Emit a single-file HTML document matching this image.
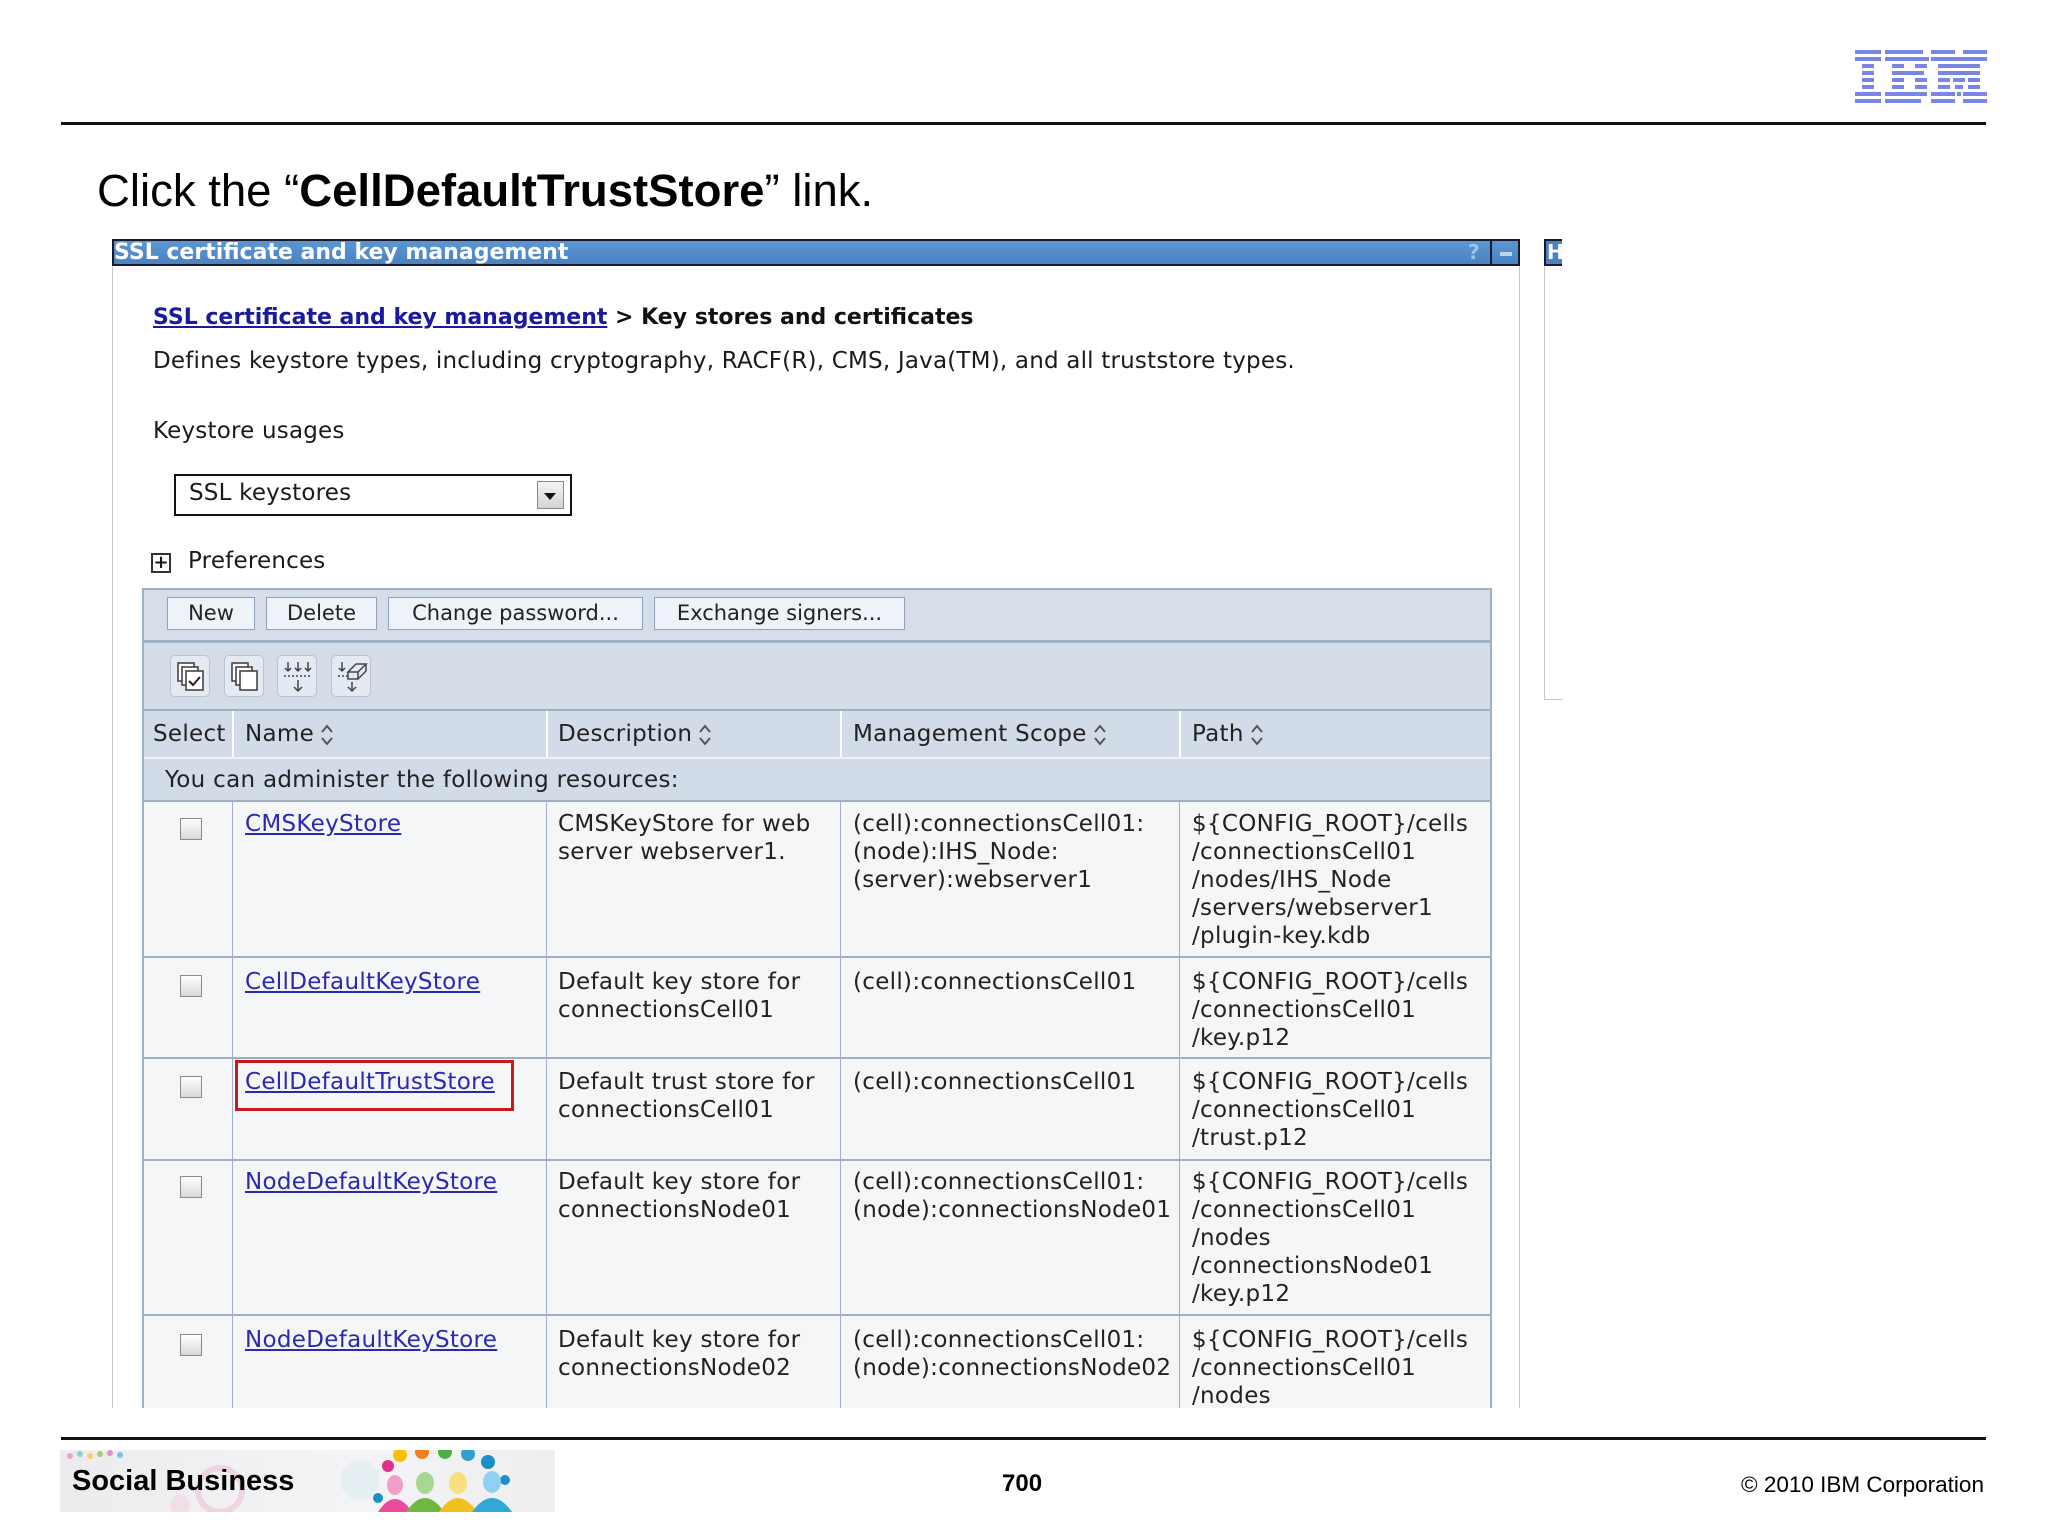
<!DOCTYPE html>
<html><head><meta charset="utf-8">
<style>
*{margin:0;padding:0;box-sizing:border-box}
body{width:2048px;height:1536px;background:#fff;position:relative;overflow:hidden;font-family:"DejaVu Sans",sans-serif;color:#1a1a1a}
.a{position:absolute;white-space:nowrap}
.ui{font-family:"DejaVu Sans",sans-serif;font-size:23px;letter-spacing:0.2px}
.btn{position:absolute;top:597px;height:33px;background:#eef3f9;border:1px solid #8ea3bb;font-size:21px;line-height:31px;text-align:center;color:#222}
.ic{position:absolute;top:655px;width:40px;height:42px;background:#e4eaf1;border:1px solid #b8c4d2;border-radius:5px}
.vl{position:absolute;width:1px;background:#9fb0c4}
.hl{position:absolute;height:2px;background:#9fb0c4;left:142px;width:1350px}
.cb{position:absolute;left:180px;width:22px;height:22px;border:1px solid #8a8a8a;background:linear-gradient(#fff,#d8d8d8)}
.t{position:absolute;font-size:23px;line-height:28px;white-space:nowrap;color:#222;letter-spacing:0.3px}
.t.lk{color:#2a2ab0;text-decoration:underline}
.srt{display:inline-block;vertical-align:middle;margin-left:6px}
</style></head><body>

<svg class="a" style="left:1855px;top:50px" width="132" height="54" viewBox="0 0 132 54">
<g fill="#7a86e6">
<rect x="0" y="0" width="26" height="4"/><rect x="30" y="0" width="38" height="4"/><rect x="76" y="0" width="24" height="4"/><rect x="108" y="0" width="24" height="4"/>
<rect x="0" y="7" width="26" height="4"/><rect x="30" y="7" width="44" height="4"/><rect x="76" y="7" width="28" height="4"/><rect x="104" y="7" width="28" height="4"/>
<rect x="7" y="14" width="12" height="4"/><rect x="37" y="14" width="12" height="4"/><rect x="60" y="14" width="12" height="4"/><rect x="83" y="14" width="42" height="4"/>
<rect x="7" y="21" width="12" height="4"/><rect x="37" y="21" width="32" height="4"/><rect x="83" y="21" width="42" height="4"/>
<rect x="7" y="28" width="12" height="4"/><rect x="37" y="28" width="12" height="4"/><rect x="60" y="28" width="12" height="4"/><rect x="83" y="28" width="12" height="4"/><rect x="98" y="28" width="12" height="4"/><rect x="113" y="28" width="12" height="4"/>
<rect x="7" y="35" width="12" height="4"/><rect x="37" y="35" width="12" height="4"/><rect x="60" y="35" width="12" height="4"/><rect x="83" y="35" width="12" height="4"/><rect x="100" y="35" width="8" height="4"/><rect x="113" y="35" width="12" height="4"/>
<rect x="0" y="42" width="26" height="4"/><rect x="30" y="42" width="42" height="4"/><rect x="76" y="42" width="24" height="4"/><rect x="102" y="42" width="4" height="4"/><rect x="108" y="42" width="24" height="4"/>
<rect x="0" y="49" width="26" height="4"/><rect x="30" y="49" width="36" height="4"/><rect x="76" y="49" width="24" height="4"/><rect x="108" y="49" width="24" height="4"/>
</g></svg>
<div class="a" style="left:61px;top:122px;width:1925px;height:3px;background:#111"></div>

<div class="a" style="left:97px;top:165px;font-family:'Liberation Sans',sans-serif;font-size:45.5px;color:#000">Click the “<b>CellDefaultTrustStore</b>” link.</div>

<div class="a" style="left:112px;top:239px;width:1408px;height:27px;background:linear-gradient(#5b96d4,#4a82c2);border:2px solid #1a1a2a"></div>
<div class="a" style="left:114px;top:239px;font-size:22px;font-weight:bold;color:#fff;line-height:27px">SSL certificate and key management</div>
<div class="a" style="left:1468px;top:239px;font-size:20px;font-weight:bold;color:#9cc4ec;line-height:27px">?</div>
<div class="a" style="left:1490px;top:241px;width:2px;height:23px;background:#1a1a2a"></div>
<div class="a" style="left:1500px;top:252px;width:12px;height:4px;background:#bcd6f0"></div>
<div class="a" style="left:112px;top:266px;width:1px;height:1142px;background:#c8c8c8"></div>
<div class="a" style="left:1519px;top:266px;width:1px;height:1142px;background:#c8c8c8"></div>
<div class="a" style="left:1544px;top:239px;width:18px;height:27px;background:#4a82c2;border:2px solid #1a1a2a;border-right:none"></div>
<div class="a" style="left:1547px;top:239px;font-size:20px;font-weight:bold;color:#fff;line-height:27px">H</div>
<div class="a" style="left:1544px;top:266px;width:1px;height:434px;background:#c8c8c8"></div>
<div class="a" style="left:1544px;top:699px;width:18px;height:1px;background:#c8c8c8"></div>

<div class="a" style="left:153px;top:305px;font-size:22px;font-weight:bold;color:#111"><span style="color:#1a1aa0;text-decoration:underline">SSL certificate and key management</span> &gt; Key stores and certificates</div>
<div class="a ui" style="left:153px;top:348px">Defines keystore types, including cryptography, RACF(R), CMS, Java(TM), and all truststore types.</div>
<div class="a ui" style="left:153px;top:418px">Keystore usages</div>

<div class="a" style="left:174px;top:474px;width:398px;height:42px;border:2px solid #111;background:#fff"></div>
<div class="a ui" style="left:189px;top:480px">SSL keystores</div>
<div class="a" style="left:537px;top:481px;width:27px;height:28px;border:1px solid #888;background:linear-gradient(#f4f4f4,#d4d4d4)"></div>
<div class="a" style="left:544px;top:493px;width:0;height:0;border-left:6px solid transparent;border-right:6px solid transparent;border-top:7px solid #111"></div>

<div class="a" style="left:151px;top:553px;width:20px;height:20px;border:2px solid #333;background:#fff;font-size:18px;line-height:15px;text-align:center;font-weight:bold">+</div>
<div class="a ui" style="left:188px;top:548px">Preferences</div>

<div class="a" style="left:142px;top:588px;width:1350px;height:820px;border:2px solid #9fb0c4;border-bottom:none;background:#f5f6f8"></div>
<div class="a" style="left:144px;top:590px;width:1346px;height:50px;background:#d5dee9"></div>
<div class="a" style="left:144px;top:640px;width:1346px;height:3px;background:#9fb0c4"></div>
<div class="a" style="left:144px;top:643px;width:1346px;height:66px;background:#d3dce7"></div>
<div class="btn" style="left:167px;width:88px">New</div>
<div class="btn" style="left:266px;width:111px">Delete</div>
<div class="btn" style="left:388px;width:255px">Change password...</div>
<div class="btn" style="left:654px;width:251px">Exchange signers...</div>

<div class="ic" style="left:170px"><svg width="40" height="42"><g fill="#fff" stroke="#444" stroke-width="1.6"><rect x="7" y="7" width="16" height="18"/><rect x="11" y="11" width="16" height="18"/><rect x="15" y="15" width="17" height="19"/></g><path d="M18 25l4 4 7-8" stroke="#222" stroke-width="2" fill="none"/></svg></div>
<div class="ic" style="left:224px"><svg width="40" height="42"><g fill="#fff" stroke="#444" stroke-width="1.6"><rect x="7" y="7" width="16" height="18"/><rect x="11" y="11" width="16" height="18"/><rect x="15" y="15" width="17" height="19"/></g></svg></div>
<div class="ic" style="left:277px"><svg width="40" height="42"><g stroke="#444" stroke-width="1.5" fill="none"><path d="M10 6v9M7 12l3 3 3-3M20 6v9M17 12l3 3 3-3M30 6v9M27 12l3 3 3-3M20 24v11M16 31l4 4 4-4"/><path d="M6 20h28" stroke-dasharray="2 2"/></g></svg></div>
<div class="ic" style="left:331px"><svg width="40" height="42"><g stroke="#444" stroke-width="1.5" fill="none"><path d="M10 6v9M7 12l3 3 3-3M20 26v9M16 31l4 4 4-4"/><path d="M16 16l8-8h10l-8 8zM16 16v7h10v-7M26 23l8-8v-7"/><path d="M6 20h12" stroke-dasharray="2 2"/></g></svg></div>

<div class="a" style="left:144px;top:709px;width:1346px;height:48px;background:#d2dce8;border-top:2px solid #9fb0c4"></div>
<div class="a" style="left:144px;top:757px;width:1346px;height:45px;background:#d2dce8;border-top:2px solid #eef2f7;border-bottom:2px solid #9fb0c4"></div>
<div class="vl" style="left:232px;top:711px;height:46px;background:#fff;width:2px"></div>
<div class="vl" style="left:546px;top:711px;height:46px;background:#fff;width:2px"></div>
<div class="vl" style="left:840px;top:711px;height:46px;background:#fff;width:2px"></div>
<div class="vl" style="left:1179px;top:711px;height:46px;background:#fff;width:2px"></div>
<div class="t" style="left:153px;top:720px">Select</div>
<div class="t" style="left:245px;top:720px">Name<svg class="srt" width="14" height="24"><path d="M2 9l5-6 5 6M2 15l5 6 5-6" stroke="#555" stroke-width="2" fill="none"/></svg></div>
<div class="t" style="left:558px;top:720px">Description<svg class="srt" width="14" height="24"><path d="M2 9l5-6 5 6M2 15l5 6 5-6" stroke="#555" stroke-width="2" fill="none"/></svg></div>
<div class="t" style="left:853px;top:720px">Management Scope<svg class="srt" width="14" height="24"><path d="M2 9l5-6 5 6M2 15l5 6 5-6" stroke="#555" stroke-width="2" fill="none"/></svg></div>
<div class="t" style="left:1192px;top:720px">Path<svg class="srt" width="14" height="24"><path d="M2 9l5-6 5 6M2 15l5 6 5-6" stroke="#555" stroke-width="2" fill="none"/></svg></div>
<div class="t" style="left:165px;top:766px">You can administer the following resources:</div>

<div class="vl" style="left:232px;top:802px;height:606px"></div>
<div class="vl" style="left:546px;top:802px;height:606px"></div>
<div class="vl" style="left:840px;top:802px;height:606px"></div>
<div class="vl" style="left:1179px;top:802px;height:606px"></div>
<div class="hl" style="top:956px"></div>
<div class="hl" style="top:1057px"></div>
<div class="hl" style="top:1159px"></div>
<div class="hl" style="top:1314px"></div>

<div class="cb" style="top:818px"></div>
<div class="t lk" style="left:245px;top:810px">CMSKeyStore</div>
<div class="t" style="left:558px;top:810px">CMSKeyStore for web<br>server webserver1.</div>
<div class="t" style="left:853px;top:810px">(cell):connectionsCell01:<br>(node):IHS_Node:<br>(server):webserver1</div>
<div class="t" style="left:1192px;top:810px">${CONFIG_ROOT}/cells<br>/connectionsCell01<br>/nodes/IHS_Node<br>/servers/webserver1<br>/plugin-key.kdb</div>

<div class="cb" style="top:975px"></div>
<div class="t lk" style="left:245px;top:968px">CellDefaultKeyStore</div>
<div class="t" style="left:558px;top:968px">Default key store for<br>connectionsCell01</div>
<div class="t" style="left:853px;top:968px">(cell):connectionsCell01</div>
<div class="t" style="left:1192px;top:968px">${CONFIG_ROOT}/cells<br>/connectionsCell01<br>/key.p12</div>

<div class="cb" style="top:1076px"></div>
<div class="a" style="left:235px;top:1060px;width:279px;height:51px;border:3px solid #c8191e"></div>
<div class="t lk" style="left:245px;top:1068px">CellDefaultTrustStore</div>
<div class="t" style="left:558px;top:1068px">Default trust store for<br>connectionsCell01</div>
<div class="t" style="left:853px;top:1068px">(cell):connectionsCell01</div>
<div class="t" style="left:1192px;top:1068px">${CONFIG_ROOT}/cells<br>/connectionsCell01<br>/trust.p12</div>

<div class="cb" style="top:1176px"></div>
<div class="t lk" style="left:245px;top:1168px">NodeDefaultKeyStore</div>
<div class="t" style="left:558px;top:1168px">Default key store for<br>connectionsNode01</div>
<div class="t" style="left:853px;top:1168px">(cell):connectionsCell01:<br>(node):connectionsNode01</div>
<div class="t" style="left:1192px;top:1168px">${CONFIG_ROOT}/cells<br>/connectionsCell01<br>/nodes<br>/connectionsNode01<br>/key.p12</div>

<div class="cb" style="top:1334px"></div>
<div class="t lk" style="left:245px;top:1326px">NodeDefaultKeyStore</div>
<div class="t" style="left:558px;top:1326px">Default key store for<br>connectionsNode02</div>
<div class="t" style="left:853px;top:1326px">(cell):connectionsCell01:<br>(node):connectionsNode02</div>
<div class="t" style="left:1192px;top:1326px;height:82px;overflow:hidden">${CONFIG_ROOT}/cells<br>/connectionsCell01<br>/nodes</div>
<div class="a" style="left:0;top:1408px;width:2048px;height:30px;background:#fff"></div>

<div class="a" style="left:61px;top:1437px;width:1925px;height:3px;background:#111"></div>
<div class="a" style="left:60px;top:1450px;width:495px;height:62px;background:linear-gradient(90deg,#ececee,#f4f4f6 60%,#eeeeef);overflow:hidden">
<svg width="495" height="62">
<g opacity="0.35"><circle cx="160" cy="40" r="22" fill="none" stroke="#f0a0c8" stroke-width="6"/><circle cx="300" cy="30" r="20" fill="#cce8f0"/><circle cx="120" cy="55" r="10" fill="#f8c0d8"/></g>
<g><circle cx="10" cy="6" r="3" fill="#f2a0c0"/><circle cx="20" cy="4" r="3" fill="#8cd0e0"/><circle cx="30" cy="6" r="3" fill="#f8d060"/><circle cx="40" cy="4" r="3" fill="#a0d070"/><circle cx="50" cy="3" r="3" fill="#e890c0"/><circle cx="60" cy="5" r="3" fill="#80c0e8"/></g>
<circle cx="340" cy="5" r="7" fill="#f8c000"/><circle cx="362" cy="2" r="7" fill="#f08020"/><circle cx="385" cy="2" r="7" fill="#50b048"/><circle cx="408" cy="4" r="7" fill="#30a0d0"/><circle cx="428" cy="12" r="7" fill="#1890c8"/><circle cx="328" cy="16" r="6" fill="#e0308c"/><circle cx="445" cy="30" r="5" fill="#1890c8"/><circle cx="318" cy="48" r="5" fill="#1890c8"/>
<ellipse cx="335" cy="35" rx="8" ry="10" fill="#f0a0c8"/><path d="M318 62q17-26 34 0z" fill="#e84c9c"/>
<ellipse cx="365" cy="33" rx="9" ry="11" fill="#a8d890"/><path d="M346 62q19-28 38 0z" fill="#70b840"/>
<ellipse cx="398" cy="33" rx="9" ry="11" fill="#f8e080"/><path d="M379 62q19-28 38 0z" fill="#f0c020"/>
<ellipse cx="432" cy="32" rx="9" ry="11" fill="#90d0f0"/><path d="M412 62q20-28 40 0z" fill="#30a8d8"/>
</svg>
<div class="a" style="left:12px;top:15px;font-family:'Liberation Sans',sans-serif;font-weight:bold;font-size:29px;color:#000">Social Business</div>
</div>
<div class="a" style="left:1002px;top:1470px;font-family:'Liberation Sans',sans-serif;font-weight:bold;font-size:24px;color:#000">700</div>
<div class="a" style="left:1741px;top:1472px;font-family:'Liberation Sans',sans-serif;font-size:22.5px;color:#000">© 2010 IBM Corporation</div>
</body></html>
